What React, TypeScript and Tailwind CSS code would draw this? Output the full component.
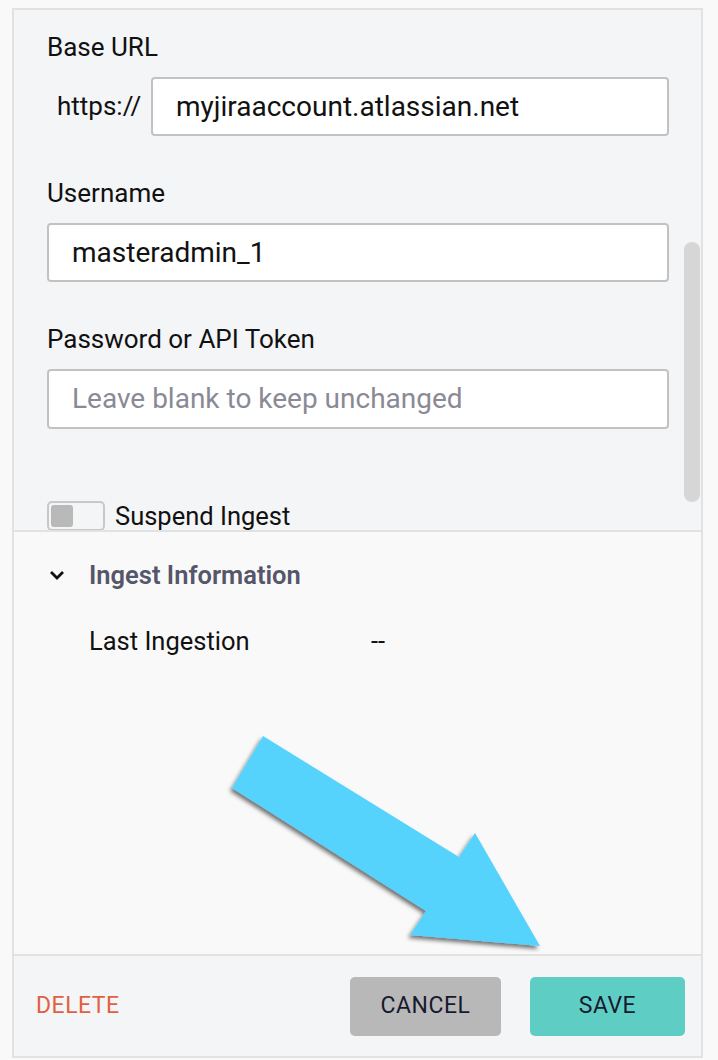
import React from "react";

export default function App() {
  const font = { fontFamily: "Roboto, 'Liberation Sans', sans-serif" };
  return (
    <div className="relative w-[718px] h-[1060px] bg-[#f9f9f9] overflow-hidden" style={font}>
      <div className="ml-[12px] mt-[8px] w-[691px] h-[1050px] border-2 border-[#e2e2e2] flex flex-col">
        {/* top form section */}
        <div className="relative h-[522px] shrink-0 bg-[#f4f5f7] border-b-2 border-[#e2e2e2] overflow-hidden pl-[33px] pr-[32px]">
          <div className="mt-[22px] text-[26px] leading-[30px] text-[#111]">Base URL</div>
          <div className="mt-[15px] flex items-center">
            <div className="w-[104px] pl-[10px] text-[26px] text-[#111]">https://</div>
            <div className="flex-1 h-[59px] bg-white border-2 border-[#c2c2c2] rounded-[4px] flex items-center pl-[23px] text-[28px] text-[#111]">
              myjiraaccount.atlassian.net
            </div>
          </div>
          <div className="mt-[42px] text-[26px] leading-[30px] text-[#111]">Username</div>
          <div className="mt-[15px] h-[59px] bg-white border-2 border-[#c2c2c2] rounded-[4px] flex items-center pl-[23px] text-[28px] text-[#111]">
            masteradmin_1
          </div>
          <div className="mt-[42px] text-[26px] leading-[30px] text-[#111]">Password or API Token</div>
          <div className="mt-[15px] h-[60px] bg-white border-2 border-[#c2c2c2] rounded-[4px] flex items-center pl-[23px] text-[28px] text-[#8a8a96]">
            Leave blank to keep unchanged
          </div>
          <div className="mt-[72px] flex items-center">
            <div className="w-[58px] h-[30px] border-2 border-[#c8c8c8] rounded-[5px] bg-[#f4f5f7] flex items-center pl-[2px] shrink-0">
              <div className="w-[22px] h-[22px] rounded-[3px] bg-[#b9b9b9]"></div>
            </div>
            <div className="ml-[10px] text-[25.5px] leading-[30px] text-[#111]">Suspend Ingest</div>
          </div>
          <div className="absolute left-[670px] top-[232px] w-[16px] h-[260px] rounded-full bg-[#d6d6d6]"></div>
        </div>
        {/* ingest info */}
        <div className="flex-1 bg-[#f9f9f9] border-b-2 border-[#e2e2e2]">
          <div className="mt-[28px] flex items-center pl-[34px] h-[30px]">
            <svg width="18" height="12" viewBox="0 0 18 12" className="mr-[23px]">
              <path d="M3 3 L9 9 L15 3" stroke="#111" strokeWidth="2.8" fill="none" />
            </svg>
            <div className="text-[25.5px] leading-[30px] font-semibold text-[#55566a]">Ingest Information</div>
          </div>
          <div className="mt-[36px] flex items-center pl-[75px] text-[25.5px] leading-[30px] text-[#111]">
            <div className="w-[282px]">Last Ingestion</div>
            <div>--</div>
          </div>
        </div>
        {/* footer */}
        <div className="h-[100px] shrink-0 bg-[#f4f5f7] flex items-center pl-[22px] pr-[16px]">
          <div className="text-[23px] text-[#e2603f] tracking-[0.5px]">DELETE</div>
          <div className="flex-1"></div>
          <button className="w-[151px] h-[59px] rounded-[5px] bg-[#b8b8b8] text-[23px] text-[#171a2e] tracking-[0.5px]">CANCEL</button>
          <button className="ml-[29px] w-[155px] h-[59px] rounded-[5px] bg-[#5ecec4] text-[23px] text-[#171a2e] tracking-[0.5px]">SAVE</button>
        </div>
      </div>
      {/* annotation arrow */}
      <svg className="absolute left-0 top-0 pointer-events-none" width="718" height="1060">
        <defs>
          <filter id="sh" x="-20%" y="-20%" width="140%" height="140%">
            <feDropShadow dx="-2" dy="3" stdDeviation="2" floodColor="#000" floodOpacity="0.55" />
          </filter>
        </defs>
        <polygon
          points="263,736 232,788 426,911 410,935 540,946 475,833 459,857"
          fill="#55d3fc"
          filter="url(#sh)"
        />
      </svg>
    </div>
  );
}
